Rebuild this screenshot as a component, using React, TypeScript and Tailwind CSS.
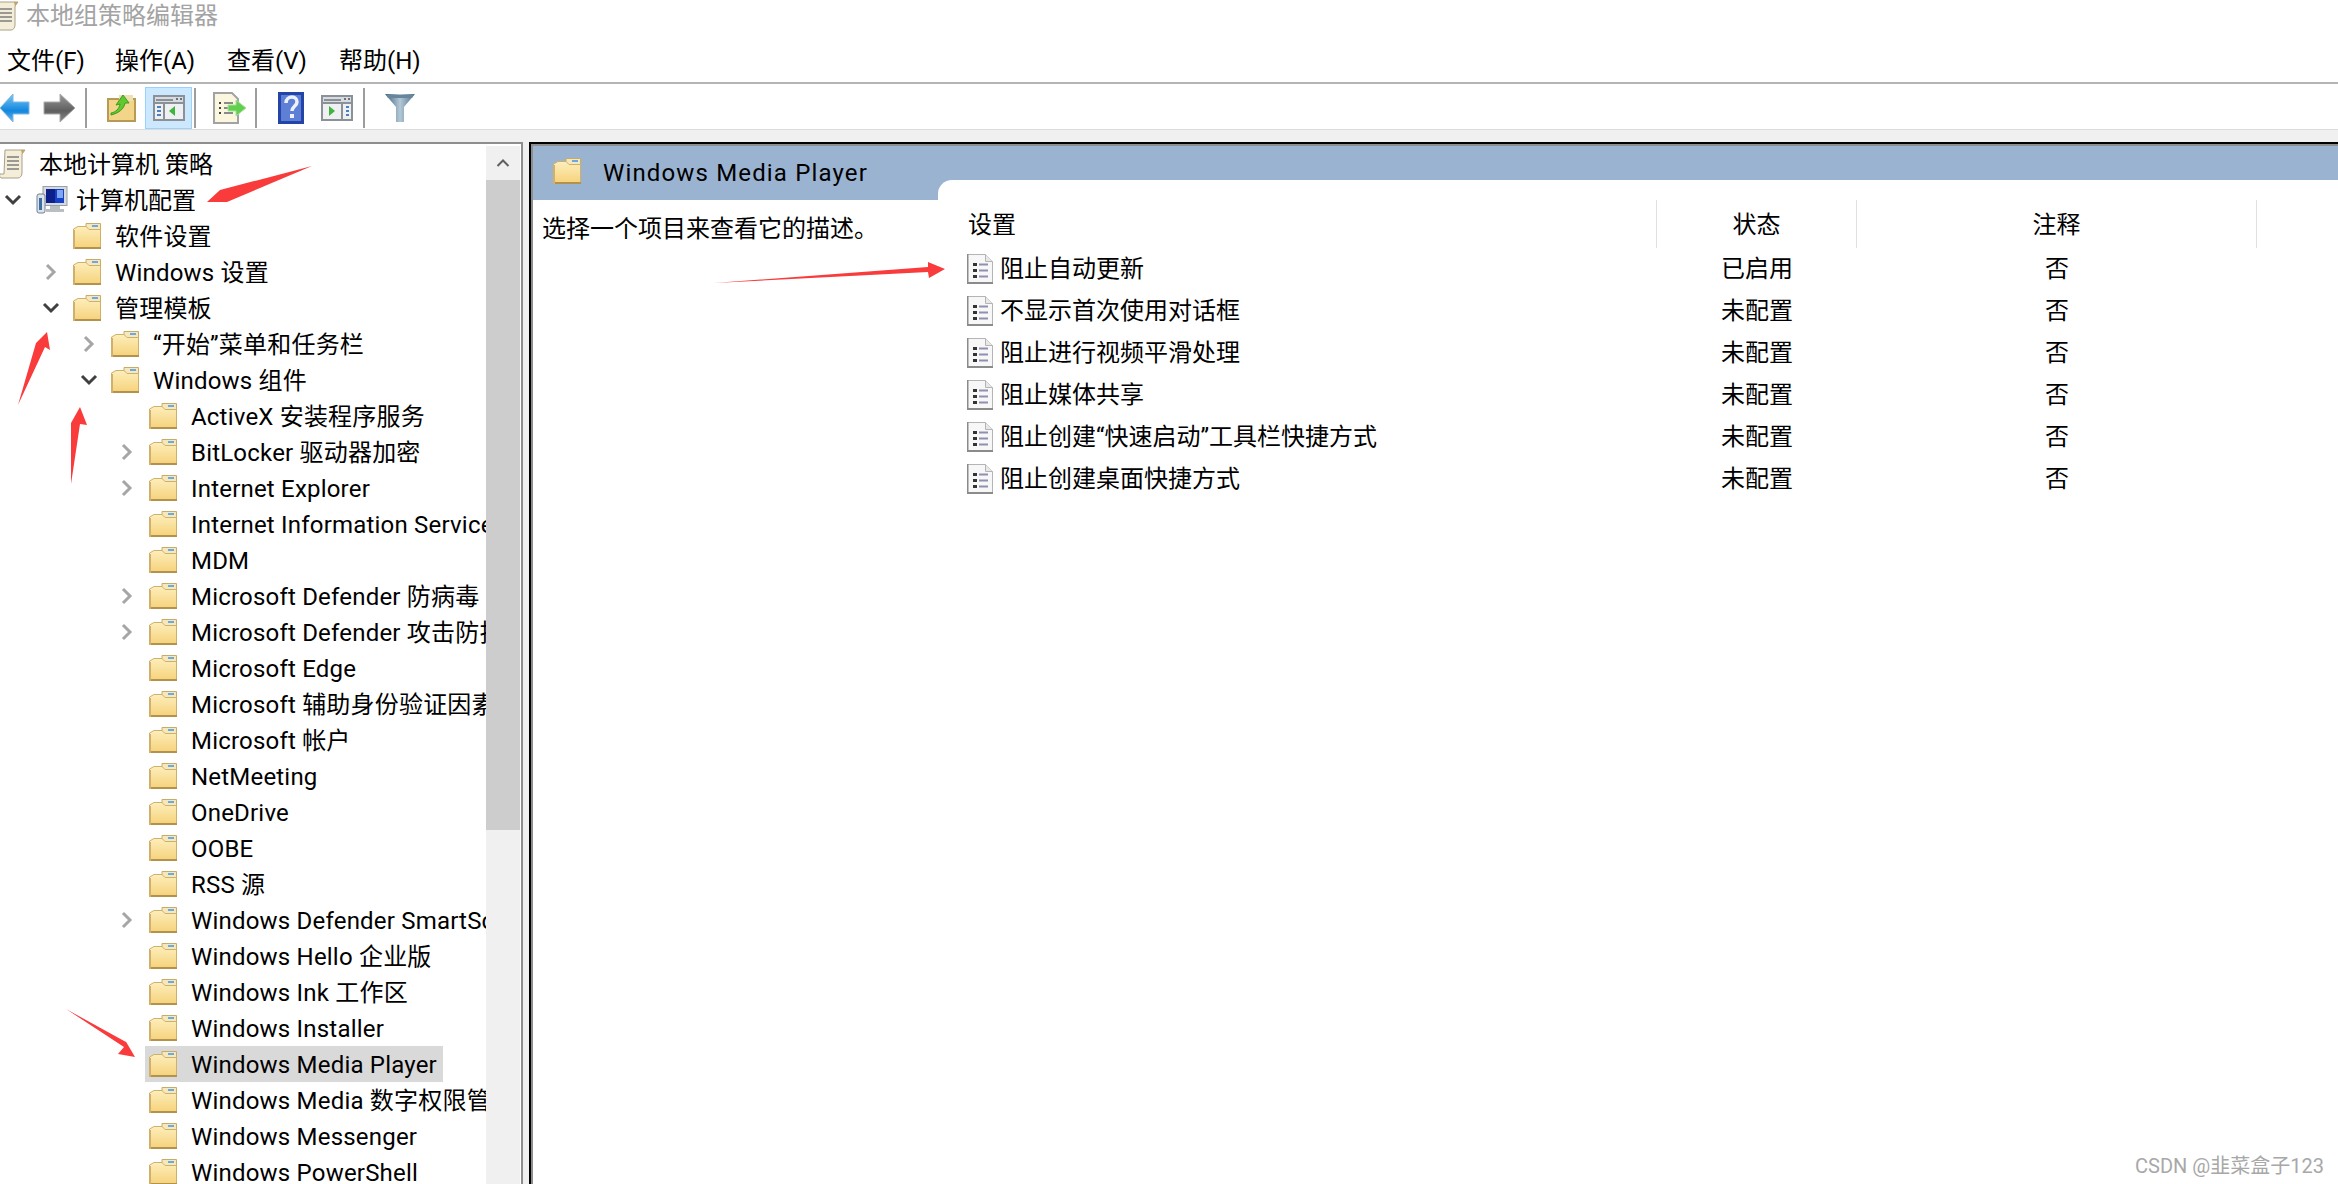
import React from "react";

const font = "font-['Roboto','Noto_Sans_CJK_SC',sans-serif]";

function Folder() {
  return (
    <svg width="28" height="26" viewBox="0 0 28 26" className="shrink-0">
      <defs>
        <linearGradient id="fg" x1="0" y1="0" x2="0" y2="1">
          <stop offset="0" stopColor="#fdeebb" />
          <stop offset="1" stopColor="#f6d27a" />
        </linearGradient>
      </defs>
      <path d="M13 .5h14.5v7H13z" fill="#f6e8bd" stroke="#c9ab66" />
      <rect x="19" y="2" width="6" height="2" fill="#6aa9e6" />
      <path d="M.5 6 5 3.5h8L16 6.5h11.5V25.5H.5z" fill="url(#fg)" stroke="#cfb06a" />
      <rect x="0" y="24" width="28" height="2" fill="#b3924e" />
      <rect x="0" y="7" width="2" height="19" fill="#d0b06a" />
    </svg>
  );
}

function ScrollIcon({ className = "" }: { className?: string }) {
  return (
    <svg width="27" height="30" viewBox="0 0 27 30" className={className}>
      <path d="M6 1h20l-3 4v19c0 3-2 5-4 5H2c-1-1-2-2-1-4h4z" fill="#f4eed8" stroke="#a8a08a" />
      <path d="M8 8h12M8 12h12M8 16h12M8 20h12" stroke="#7d7d7d" strokeWidth="1.5" />
      <path d="M22 1h4l-3 4z" fill="#c7a35a" />
    </svg>
  );
}

function Computer() {
  return (
    <svg width="32" height="28" viewBox="0 0 32 28" className="shrink-0">
      <rect x="7" y="0.5" width="24" height="19" fill="#d5dadf" stroke="#9aa0a6" />
      <rect x="10" y="3" width="18" height="14" fill="#1740c8" />
      <path d="M10 3h9v14h-9z" fill="#0d1f8a" />
      <path d="M21 4h6v8h-6z" fill="#7fa6ee" />
      <path d="M14 20h10v3h4v3H10v-3h4z" fill="#b9bec3" />
      <rect x="1" y="8" width="8" height="19" rx="2" fill="#dfe3e7" stroke="#6f8296" />
      <rect x="3" y="12" width="3" height="12" fill="#3b6ea8" />
    </svg>
  );
}

function DocIcon() {
  return (
    <svg width="26" height="30" viewBox="0 0 26 30" className="shrink-0">
      <path d="M.5.5h18l7 7v22H.5z" fill="#f7f7f7" stroke="#b4b4b4" />
      <path d="M18.5.5v7h7" fill="#e8e8e8" stroke="#b4b4b4" />
      <path d="M0 28h26v2H0zM0 0h1.5v30H0z" fill="#8b8b8b" />
      <rect x="6" y="9" width="4" height="3" fill="#333" />
      <rect x="6" y="15" width="4" height="3" fill="#333" />
      <rect x="6" y="21" width="4" height="3" fill="#333" />
      <path d="M12 10.5h9M12 16.5h9M12 22.5h9" stroke="#8f8fb0" strokeWidth="2" />
    </svg>
  );
}

function Chevron({ dir }: { dir: "right" | "down" | "none" }) {
  if (dir === "none") return <span className="w-[26px] shrink-0" />;
  return (
    <span className="w-[26px] shrink-0 flex items-center justify-center">
      {dir === "down" ? (
        <svg width="18" height="12" viewBox="0 0 18 12">
          <path d="M2 2l7 7 7-7" fill="none" stroke="#404040" strokeWidth="3" />
        </svg>
      ) : (
        <svg width="12" height="18" viewBox="0 0 12 18">
          <path d="M2 2l7 7-7 7" fill="none" stroke="#a6a6a6" strokeWidth="3" />
        </svg>
      )}
    </span>
  );
}

type Node = { t: string; l: number; c?: "right" | "down" | "none"; sel?: boolean };

const nodes: Node[] = [
  { t: "软件设置", l: 1 },
  { t: "Windows 设置", l: 1, c: "right" },
  { t: "管理模板", l: 1, c: "down" },
  { t: "“开始”菜单和任务栏", l: 2, c: "right" },
  { t: "Windows 组件", l: 2, c: "down" },
  { t: "ActiveX 安装程序服务", l: 3 },
  { t: "BitLocker 驱动器加密", l: 3, c: "right" },
  { t: "Internet Explorer", l: 3, c: "right" },
  { t: "Internet Information Services", l: 3 },
  { t: "MDM", l: 3 },
  { t: "Microsoft Defender 防病毒", l: 3, c: "right" },
  { t: "Microsoft Defender 攻击防护", l: 3, c: "right" },
  { t: "Microsoft Edge", l: 3 },
  { t: "Microsoft 辅助身份验证因素", l: 3 },
  { t: "Microsoft 帐户", l: 3 },
  { t: "NetMeeting", l: 3 },
  { t: "OneDrive", l: 3 },
  { t: "OOBE", l: 3 },
  { t: "RSS 源", l: 3 },
  { t: "Windows Defender SmartScreen", l: 3, c: "right" },
  { t: "Windows Hello 企业版", l: 3 },
  { t: "Windows Ink 工作区", l: 3 },
  { t: "Windows Installer", l: 3 },
  { t: "Windows Media Player", l: 3, sel: true },
  { t: "Windows Media 数字权限管理", l: 3 },
  { t: "Windows Messenger", l: 3 },
  { t: "Windows PowerShell", l: 3 },
];

const settings = [
  ["阻止自动更新", "已启用"],
  ["不显示首次使用对话框", "未配置"],
  ["阻止进行视频平滑处理", "未配置"],
  ["阻止媒体共享", "未配置"],
  ["阻止创建“快速启动”工具栏快捷方式", "未配置"],
  ["阻止创建桌面快捷方式", "未配置"],
];

function PanelIcon({ flip }: { flip?: boolean }) {
  return (
    <svg width="32" height="26" viewBox="0 0 32 26">
      <rect x="1" y="1" width="30" height="24" fill="#eef0f2" stroke="#8c9097" strokeWidth="2" />
      <rect x="2" y="2" width="28" height="6" fill="#d7dbe2" />
      <path d="M3 5h17" stroke="#8c9097" strokeWidth="2" />
      <path d="M23 4h2M27 4h2" stroke="#6d7178" strokeWidth="2" />
      <path d="M2 8h28" stroke="#8c9097" strokeWidth="2" />
      {flip ? (
        <>
          <path d="M21 8v16" stroke="#8c9097" strokeWidth="2" />
          <path d="M25 12h3M25 16h3M25 20h3" stroke="#4a80c0" strokeWidth="2" />
          <path d="M8 11l6 5-6 5z" fill="#3fb53f" />
        </>
      ) : (
        <>
          <path d="M11 8v16" stroke="#8c9097" strokeWidth="2" />
          <path d="M4 12h4M4 16h4M4 20h4" stroke="#4a80c0" strokeWidth="2" />
          <path d="M22 11l-6 5 6 5z" fill="#3fb53f" />
        </>
      )}
    </svg>
  );
}

function Sep() {
  return <span className="block w-[2px] h-10 bg-[#9d9d9d] shrink-0" />;
}

function Toolbar() {
  return (
    <div className="h-[46px] pt-[3px] flex items-center bg-white border-b border-[#dcdcdc] shrink-0">
      <svg width="30" height="30" viewBox="0 0 30 30" className="shrink-0">
        <defs>
          <linearGradient id="ba" x1="0" y1="0" x2="0" y2="1">
            <stop offset="0" stopColor="#7cc6f5" />
            <stop offset="0.6" stopColor="#1288de" />
            <stop offset="1" stopColor="#6ab4e8" />
          </linearGradient>
        </defs>
        <path d="M0 15 13 1v8h16v12H13v8z" fill="url(#ba)" stroke="#7fb8e4" />
      </svg>
      <svg width="32" height="30" viewBox="0 0 32 30" className="ml-[13px] shrink-0">
        <defs>
          <linearGradient id="fa" x1="0" y1="0" x2="0" y2="1">
            <stop offset="0" stopColor="#9a9a9a" />
            <stop offset="0.6" stopColor="#5f5f5f" />
            <stop offset="1" stopColor="#8a8a8a" />
          </linearGradient>
        </defs>
        <path d="M32 15 17 1v8H1v12h16v8z" fill="url(#fa)" stroke="#aaa" />
      </svg>
      <span className="ml-[10px]"><Sep /></span>
      <svg width="30" height="30" viewBox="0 0 30 30" className="ml-[20px] shrink-0">
        <path d="M1 6h27v22H1z" fill="#f3d58a" stroke="#b79a55" strokeWidth="2" />
        <path d="M12 2h14v6H12z" fill="#efe0b0" />
        <path d="M4 20c5-1 8-4 9-9l-4 1 7-10 6 8-4 0c-1 6-6 10-14 12z" fill="#5fc92e" stroke="#3d9c22" />
      </svg>
      <span className="ml-[8px] w-[47px] h-[42px] flex items-center justify-center bg-[#cce8ff] border border-[#99d1ff] shrink-0">
        <PanelIcon />
      </span>
      <span className="ml-[2px]"><Sep /></span>
      <svg width="34" height="32" viewBox="0 0 34 32" className="ml-[17px] shrink-0">
        <path d="M1 1h18l6 6v24H1z" fill="#fbf6de" stroke="#a3a3a3" strokeWidth="2" />
        <path d="M6 11h2M6 16h2M6 21h2" stroke="#444" strokeWidth="2" />
        <path d="M11 11h9M11 16h9M11 21h9" stroke="#8a8a8a" strokeWidth="2" />
        <path d="M15 13h8V8l10 8-10 8v-5h-8z" fill="#62cf50" stroke="#a6e59a" />
      </svg>
      <span className="ml-[8px]"><Sep /></span>
      <svg width="26" height="32" viewBox="0 0 26 32" className="ml-[21px] shrink-0">
        <rect width="26" height="32" fill="#2444a8" />
        <rect x="3" y="3" width="20" height="26" fill="#5d80d6" />
        <path d="M8 11c0-4 3-6 6-6s5 2 5 5c0 4-5 4-5 9" fill="none" stroke="#eef2ff" strokeWidth="3.5" />
        <rect x="12" y="22" width="4" height="4" fill="#eef2ff" />
      </svg>
      <span className="ml-[17px] shrink-0"><PanelIcon flip /></span>
      <span className="ml-[10px]"><Sep /></span>
      <svg width="30" height="28" viewBox="0 0 30 28" className="ml-[20px] shrink-0">
        <defs>
          <linearGradient id="fu" x1="0" y1="0" x2="1" y2="0">
            <stop offset="0" stopColor="#3f657f" />
            <stop offset="0.5" stopColor="#b4c8d6" />
            <stop offset="1" stopColor="#4f7288" />
          </linearGradient>
        </defs>
        <path d="M0 0h30L19 13v15h-8V13z" fill="url(#fu)" />
        <path d="M1 1h28l-2 3H3z" fill="#6a8599" />
      </svg>
    </div>
  );
}

function Arrow({ pts }: { pts: string }) {
  return <polygon points={pts} fill="#f93b3b" />;
}

export default function App() {
  return (
    <div className={`relative w-[2338px] h-[1184px] overflow-hidden bg-white flex flex-col text-black text-[24px] ${font}`}>
      <div className="h-[35px] pb-[3px] flex items-center shrink-0">
        <ScrollIcon className="-ml-[8px] shrink-0" />
        <span className="ml-[7px] text-[#a3a3a3] leading-none">本地组策略编辑器</span>
      </div>
      <div className="h-[49px] pt-[5px] flex items-center shrink-0 border-b-2 border-[#b4b4b4]">
        <span className="ml-[7px] w-[108px]">文件(F)</span>
        <span className="w-[112px]">操作(A)</span>
        <span className="w-[112px]">查看(V)</span>
        <span>帮助(H)</span>
      </div>
      <Toolbar />
      <div className="h-[12px] bg-[#f0f0f0] shrink-0" />
      <div className="flex-1 flex min-h-0 bg-[#f0f0f0]">
        <div className="w-[523px] shrink-0 flex border-t-2 border-r-2 border-[#8e8e8e] bg-white pt-[2px]">
          <div className="w-[486px] shrink-0 overflow-hidden">
            <div className="h-9 flex items-center">
              <ScrollIcon className="-ml-[1px] shrink-0" />
              <span className="ml-[13px] mt-[2px] whitespace-nowrap">本地计算机 策略</span>
            </div>
            <div className="h-9 flex items-center">
              <Chevron dir="down" />
              <span className="ml-[10px] w-[32px]"><Computer /></span>
              <span className="ml-[8px] mt-[2px] whitespace-nowrap">计算机配置</span>
            </div>
            {nodes.map((n) => (
              <div key={n.t} className="h-9 flex items-center whitespace-nowrap" style={{ paddingLeft: n.l * 38 }}>
                <Chevron dir={n.c ?? "none"} />
                <div className={`flex items-center h-9 ml-[5px] pl-[4px] pr-[6px] ${n.sel ? "bg-[#d9d9d9]" : ""}`}>
                  <Folder />
                  <span className="ml-[14px] mt-[2px] tracking-[0.2px]">{n.t}</span>
                </div>
              </div>
            ))}
          </div>
          <div className="w-[34px] shrink-0 bg-[#f0f0f0] flex flex-col">
            <div className="h-[34px] flex items-center justify-center">
              <svg width="14" height="10" viewBox="0 0 14 10">
                <path d="M1.5 8 7 2.5 12.5 8" fill="none" stroke="#606060" strokeWidth="2" />
              </svg>
            </div>
            <div className="h-[650px] bg-[#cdcdcd]" />
          </div>
        </div>
        <div className="ml-[6px] flex-1 min-w-0 border-t-2 border-l-2 border-black bg-white flex flex-col">
          <div className="border-t-2 border-l-2 border-[#8e8e8e] flex-1 flex min-h-0">
            <div className="w-[405px] shrink-0 flex flex-col">
              <div className="h-[54px] bg-[#9ab3d1] flex items-center shrink-0">
                <span className="ml-[20px] -mt-[4px]"><Folder /></span>
                <span className="ml-[22px] tracking-[1.15px] whitespace-nowrap">Windows Media Player</span>
              </div>
              <div className="pl-[9px] pt-[11px]">选择一个项目来查看它的描述。</div>
            </div>
            <div className="flex-1 min-w-0 bg-white">
              <div className="h-[34px] bg-[#9ab3d1]" />
              <div className="h-[20px] bg-[#9ab3d1]">
                <div className="h-[20px] bg-white rounded-tl-[14px]" />
              </div>
              <div className="flex h-[48px] items-center">
                <div className="w-[719px] pl-[30px] pt-[2px] h-full flex items-center border-r border-[#e0e0e0]">设置</div>
                <div className="w-[200px] pt-[2px] h-full flex items-center justify-center border-r border-[#e0e0e0]">状态</div>
                <div className="w-[400px] pt-[2px] h-full flex items-center justify-center border-r border-[#e0e0e0]">注释</div>
              </div>
              {settings.map(([a, b]) => (
                <div key={a} className="flex h-[42px] items-center">
                  <div className="w-[719px] pl-[29px] flex items-center gap-[7px]">
                    <DocIcon />
                    <span>{a}</span>
                  </div>
                  <div className="w-[200px] text-center">{b}</div>
                  <div className="w-[400px] text-center">否</div>
                </div>
              ))}
            </div>
          </div>
        </div>
      </div>
      <div className="absolute right-[14px] bottom-[3px] text-[20px] text-[#a8a8a8]">CSDN @韭菜盒子123</div>
      <svg className="absolute inset-0 pointer-events-none" width="2338" height="1184" viewBox="0 0 2338 1184">
        <Arrow pts="207,202 220,190 312,166 227,202 226,202" />
        <Arrow pts="47,332 50,350 45,347 18,405 36,343 36,343" />
        <Arrow pts="80,407 87,425 80,424 71,484 71,423" />
        <Arrow pts="135,1057 118,1054 124,1047 66,1009 126,1042 125,1040" />
        <Arrow pts="945,269 929,278 928,272 714,283 928,267 928,262" />
      </svg>
    </div>
  );
}
